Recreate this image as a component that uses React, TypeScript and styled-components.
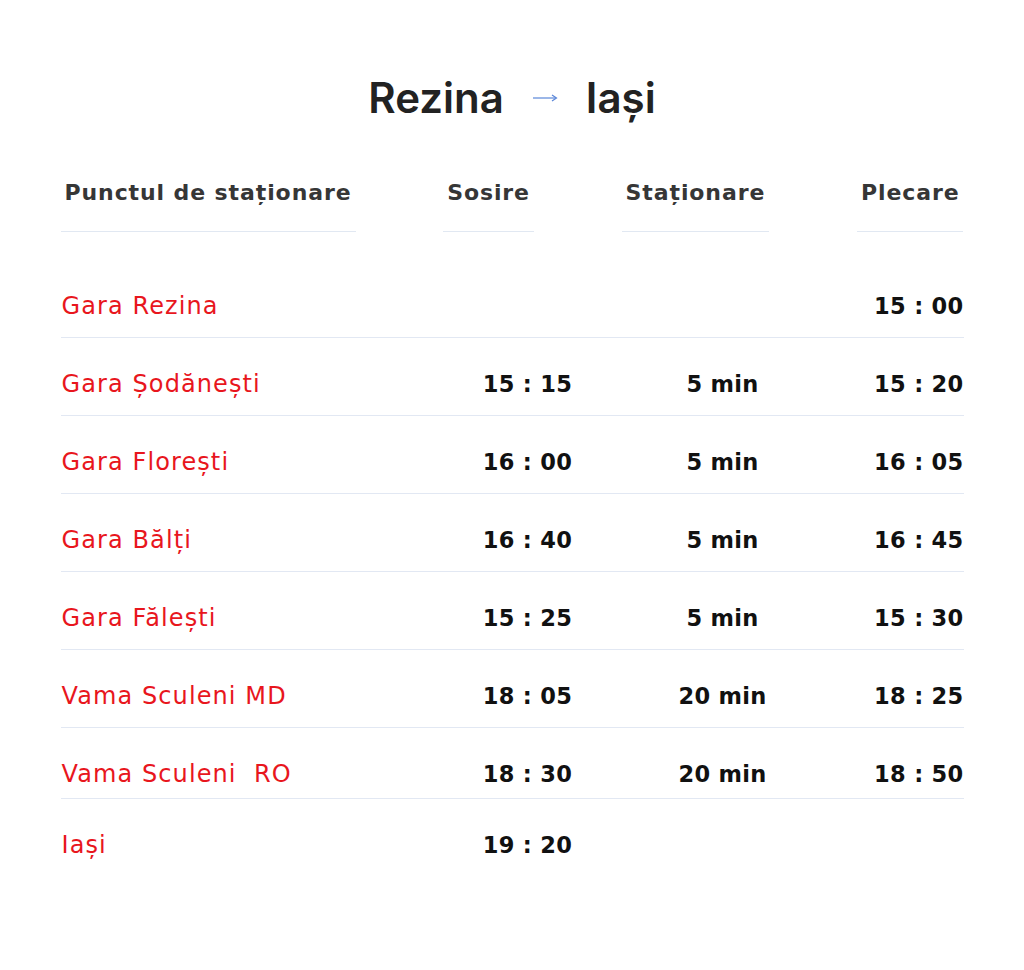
import styled, { createGlobalStyle } from "styled-components"

const GlobalStyle = createGlobalStyle`
  body {
    margin: 0;
    background: #ffffff;
    font-family: "DejaVu Sans", "Open Sans", sans-serif;
  }
`

const Page = styled.div`
  width: 903px;
  margin: 0 auto;
  padding-top: 70px;
  padding-bottom: 60px;
`

const Title = styled.h1`
  display: flex;
  align-items: center;
  justify-content: center;
  gap: 28px;
  margin: 0 0 44px;
  font-family: Inter, sans-serif;
  font-size: 42px;
  font-weight: 600;
  color: #222222;
  line-height: 56px;
`

const HeaderRow = styled.div`
  display: flex;
  justify-content: space-between;
  margin-bottom: 28px;
`

const HeaderCell = styled.div`
  font-size: 22px;
  font-weight: 700;
  color: #363636;
  line-height: 30px;
  letter-spacing: 0.9px;
  padding: 8px 4px 23px;
  border-bottom: 1px solid #e1e8f2;
`

const Row = styled.div<{ $last?: boolean; $short?: boolean }>`
  display: grid;
  grid-template-columns: 380px 174px 216px 133px;
  align-items: center;
  padding: 31px 0 ${(p) => (p.$short ? "9px" : "16px")};
  border-bottom: ${(p) => (p.$last ? "none" : "1px solid #e2e8f3")};
`

const Stop = styled.div`
  font-size: 24px;
  color: #e8161d;
  line-height: 30px;
  letter-spacing: 1.1px;
  padding-left: 1px;
  white-space: pre;
`

const Time = styled.div<{ $align: "center" | "right" }>`
  font-size: 22.5px;
  font-weight: 700;
  color: #111111;
  line-height: 30px;
  letter-spacing: 0.3px;
  text-align: ${(p) => p.$align};
`

function Arrow() {
  return (
    <svg width="26" height="10" viewBox="0 0 26 10">
      <line x1="1" y1="5" x2="24" y2="5" stroke="#5a86d8" strokeWidth="1.2" />
      <path d="M20 2 L24.5 5 L20 8" fill="none" stroke="#5a86d8" strokeWidth="1.2" />
    </svg>
  )
}

const stops = [
  { name: "Gara Rezina", arrive: "", stay: "", leave: "15 : 00" },
  { name: "Gara Șodănești", arrive: "15 : 15", stay: "5 min", leave: "15 : 20" },
  { name: "Gara Florești", arrive: "16 : 00", stay: "5 min", leave: "16 : 05" },
  { name: "Gara Bălți", arrive: "16 : 40", stay: "5 min", leave: "16 : 45" },
  { name: "Gara Fălești", arrive: "15 : 25", stay: "5 min", leave: "15 : 30" },
  { name: "Vama Sculeni MD", arrive: "18 : 05", stay: "20 min", leave: "18 : 25" },
  { name: "Vama Sculeni  RO", arrive: "18 : 30", stay: "20 min", leave: "18 : 50" },
  { name: "Iași", arrive: "19 : 20", stay: "", leave: "" },
]

export default function App() {
  return (
    <>
      <GlobalStyle />
      <Page>
        <Title>
          <span>Rezina</span>
          <Arrow />
          <span>Iași</span>
        </Title>

        <HeaderRow>
          <HeaderCell>Punctul de staționare</HeaderCell>
          <HeaderCell>Sosire</HeaderCell>
          <HeaderCell>Staționare</HeaderCell>
          <HeaderCell>Plecare</HeaderCell>
        </HeaderRow>

        {stops.map((s, i) => (
          <Row key={s.name} $last={i === stops.length - 1} $short={i === 6}>
            <Stop>{s.name}</Stop>
            <Time $align="center">{s.arrive}</Time>
            <Time $align="center">{s.stay}</Time>
            <Time $align="right">{s.leave}</Time>
          </Row>
        ))}
      </Page>
    </>
  )
}
